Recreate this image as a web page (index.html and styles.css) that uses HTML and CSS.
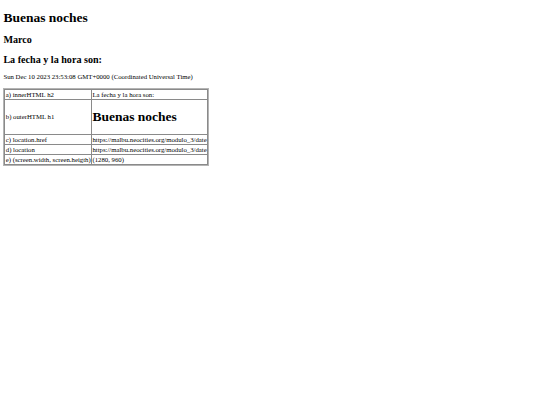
FILE: index.html
```html
<!DOCTYPE html>
<html lang="es">
<head>
<meta charset="utf-8">
<title>Buenas noches</title>
<link rel="stylesheet" href="styles.css">
</head>
<body class="page">
<h1 class="greeting">Buenas noches</h1>
<h2 class="name">Marco</h2>
<h2 class="subtitle">La fecha y la hora son:</h2>
<p class="date">Sun Dec 10 2023 23:53:08 GMT+0000 (Coordinated Universal Time)</p>
<table class="info">
  <tr><td class="cell">a) innerHTML h2</td><td class="cell">La fecha y la hora son:</td></tr>
  <tr><td class="cell">b) outerHTML h1</td><td class="cell"><h1 class="cell-greeting">Buenas noches</h1></td></tr>
  <tr><td class="cell">c) location.href</td><td class="cell">https://malbu.neocities.org/modulo_3/date</td></tr>
  <tr><td class="cell">d) location</td><td class="cell">https://malbu.neocities.org/modulo_3/date</td></tr>
  <tr><td class="cell">e) (screen.width, screen.heigth)</td><td class="cell">(1280, 960)</td></tr>
</table>
</body>
</html>
```

FILE: styles.css
```css
.page {
  margin: 3.375px;
  font-family: "Liberation Serif", "Times New Roman", serif;
  font-size: 6.75px;
  color: #000;
  background: #fff;
}

.greeting {
  font-size: 13.5px;
  font-weight: bold;
  margin: 6.5px 0 8px;
}

.name {
  font-size: 10.125px;
  font-weight: bold;
  margin: 7.2px 0 9.2px;
}

.subtitle {
  font-size: 10.125px;
  font-weight: bold;
  margin: 7.2px 0 8.4px;
}

.date {
  font-size: 6.75px;
  margin: 6.75px 0 7.5px;
}

.info {
  border: 1px solid #b4b4b4;
  border-spacing: 0;
  font-size: 6.75px;
}

.cell {
  border: 1px solid #8a8a8a;
  border-width: 0 1px 1px 0;
  padding: 1.1px 0.4px;
}

.info tr:first-child .cell {
  border-top-width: 1px;
}

.info .cell:first-child {
  border-left-width: 1px;
}

.cell-greeting {
  font-size: 13.5px;
  font-weight: bold;
  margin: 7.6px 0;
}
```
